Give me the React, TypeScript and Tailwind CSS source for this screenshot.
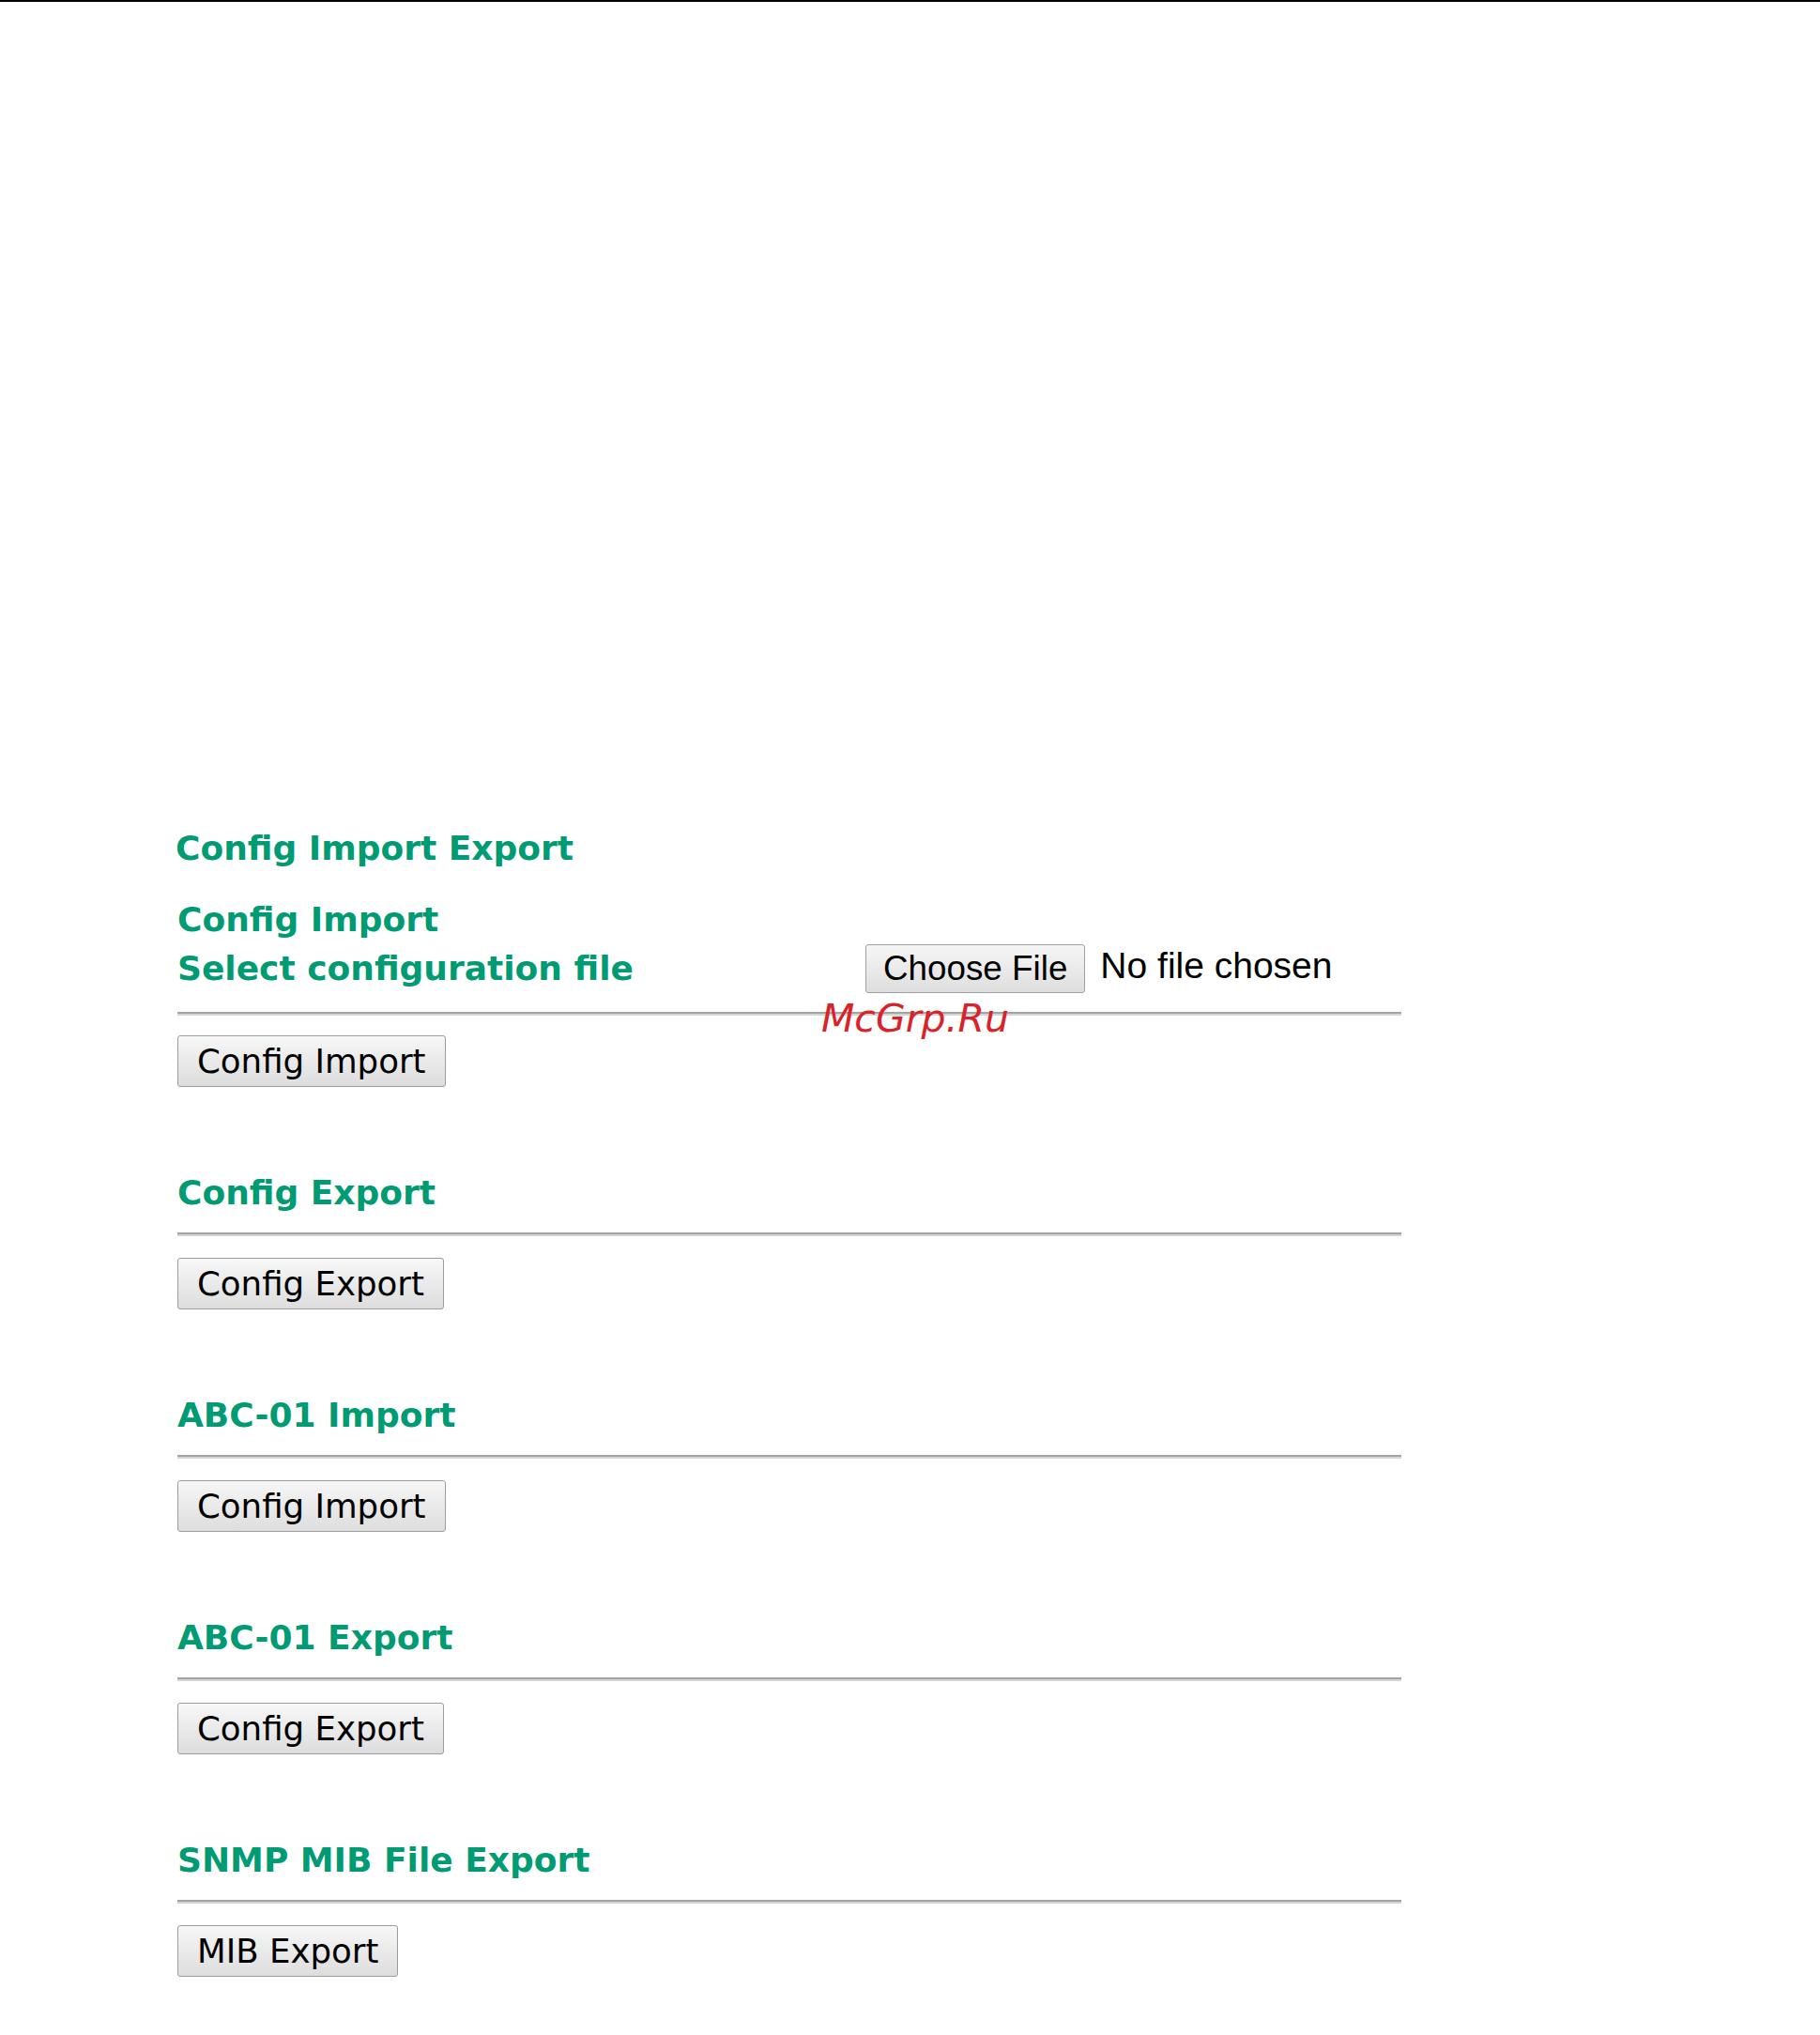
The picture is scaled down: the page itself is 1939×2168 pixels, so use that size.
import React from 'react';

const headingCls =
  "h-[44px] leading-[44px] text-[36px] font-bold text-[#009b72] font-['DejaVu_Sans',sans-serif] whitespace-nowrap";

// Plain grey legacy button look
function LegacyButton({ label }: { label: string }) {
  return (
    <button className="h-[55px] px-[20px] border border-[#9c9c9c] rounded-[3px] bg-gradient-to-b from-[#f7f7f7] to-[#dddddd] text-[35.6px] leading-none text-black font-['DejaVu_Sans',sans-serif] whitespace-nowrap">
      {label}
    </button>
  );
}

function Rule() {
  return <div className="w-[1304px] h-[4px] border-t-[2px] border-b-[2px] border-t-[#a3a3a3] border-b-[#d4d4d4]" />;
}

interface Section {
  title: string;
  button: string;
}

const sections: Section[] = [
  { title: 'Config Export', button: 'Config Export' },
  { title: 'ABC-01 Import', button: 'Config Import' },
  { title: 'ABC-01 Export', button: 'Config Export' },
  { title: 'SNMP MIB File Export', button: 'MIB Export' },
];

export default function App() {
  return (
    <div className="relative min-h-[2168px] bg-white border-t-[2px] border-black">
      <div className="pl-[189px] pt-[880px]">
        <div className={`${headingCls} -ml-[2px]`}>Config Import Export</div>

        {/* Config Import block */}
        <div className={`${headingCls} mt-[32px]`}>Config Import</div>
        <div className="flex items-center h-[52px] mt-[4px]">
          <div className={`${headingCls} w-[733px]`}>Select configuration file</div>
          <div className="flex items-center gap-[16px]">
            <button className="h-[52px] px-[18px] border border-[#a0a0a0] rounded-[3px] bg-gradient-to-b from-[#f6f6f6] to-[#dedede] text-[36.8px] leading-none text-black font-['Liberation_Sans',Arial,sans-serif] whitespace-nowrap">
              Choose File
            </button>
            <span className="-mt-[8px] text-[39px] leading-none text-black font-['Liberation_Sans',Arial,sans-serif] whitespace-nowrap">
              No file chosen
            </span>
          </div>
        </div>
        <div className="mt-[20px]">
          <Rule />
        </div>
        <div className="mt-[21px]">
          <LegacyButton label="Config Import" />
        </div>

        {sections.map((s) => (
          <div key={s.title} className="mt-[91px]">
            <div className={headingCls}>{s.title}</div>
            <div className="mt-[20px]">
              <Rule />
            </div>
            <div className="mt-[23px]">
              <LegacyButton label={s.button} />
            </div>
          </div>
        ))}
      </div>

      {/* watermark */}
      <div className="absolute left-[875px] top-[1058px] text-[41px] leading-[50px] italic text-[#d9232a] font-['DejaVu_Sans',sans-serif] whitespace-nowrap">
        McGrp.Ru
      </div>
    </div>
  );
}
